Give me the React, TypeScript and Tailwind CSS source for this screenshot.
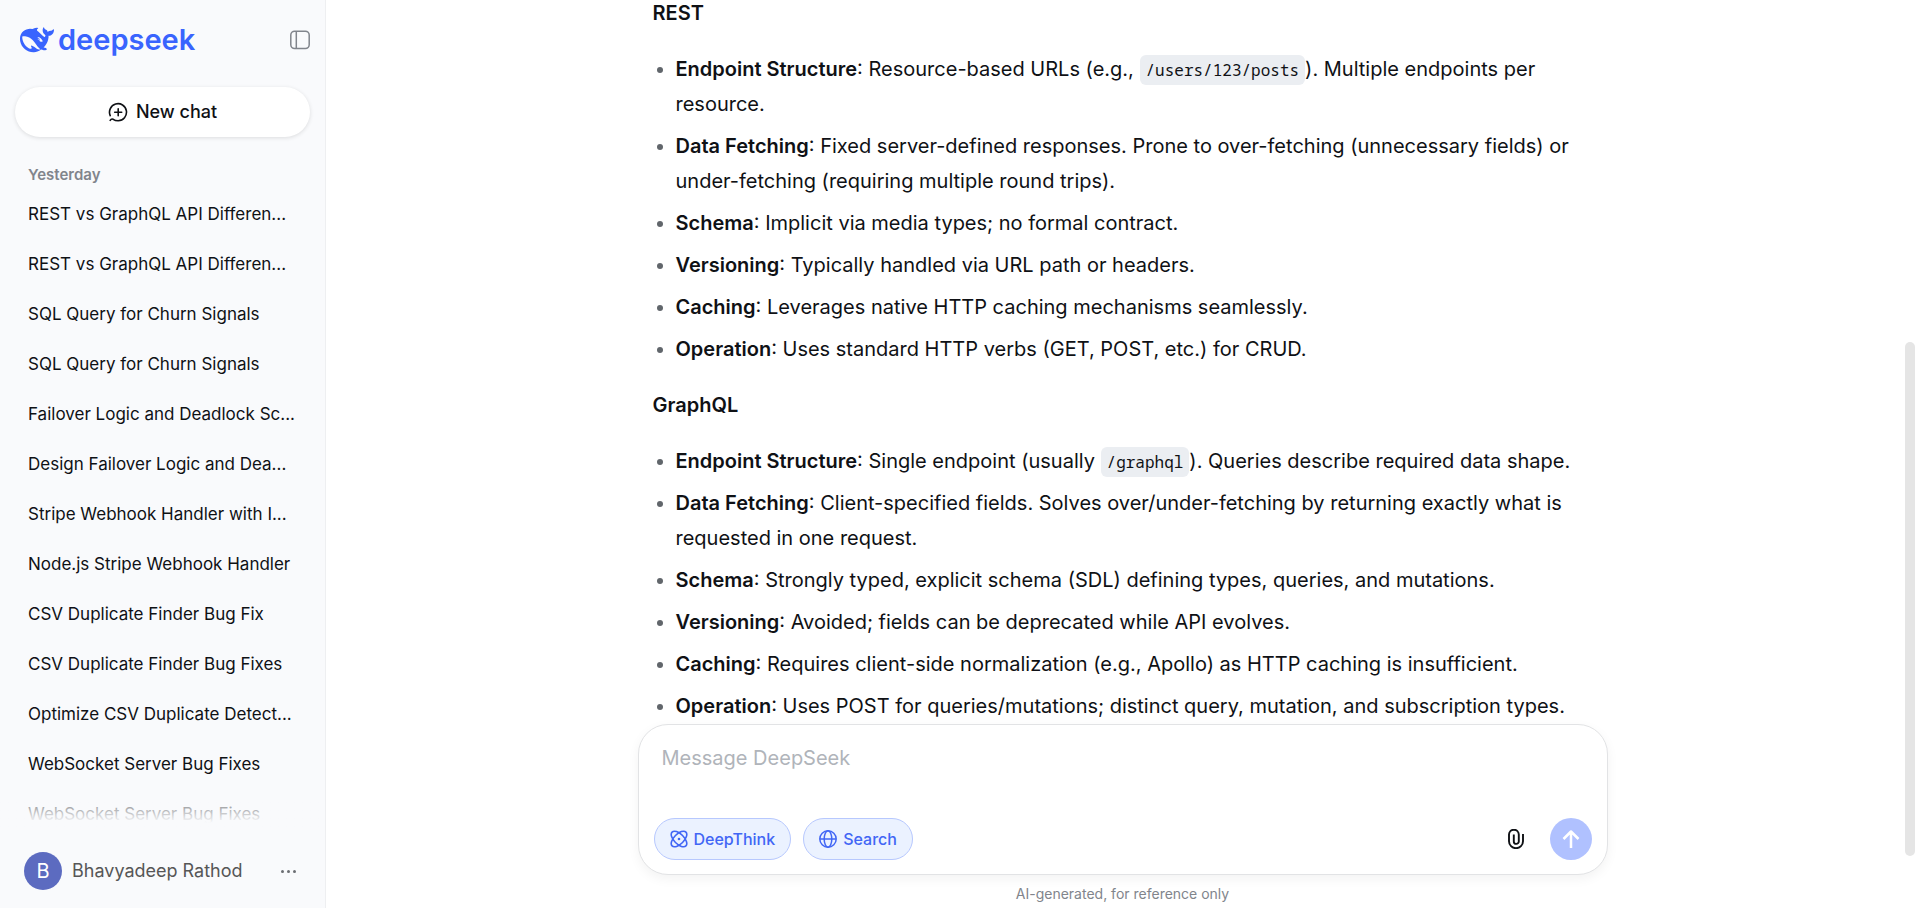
import type { ReactNode } from "react";

interface Conversation {
  id: number;
  title: string;
}

interface Point {
  term: string;
  text: ReactNode;
}

const conversations: Conversation[] = [
  { id: 1, title: "REST vs GraphQL API Differen..." },
  { id: 2, title: "REST vs GraphQL API Differen..." },
  { id: 3, title: "SQL Query for Churn Signals" },
  { id: 4, title: "SQL Query for Churn Signals" },
  { id: 5, title: "Failover Logic and Deadlock Sc..." },
  { id: 6, title: "Design Failover Logic and Dea..." },
  { id: 7, title: "Stripe Webhook Handler with I..." },
  { id: 8, title: "Node.js Stripe Webhook Handler" },
  { id: 9, title: "CSV Duplicate Finder Bug Fix" },
  { id: 10, title: "CSV Duplicate Finder Bug Fixes" },
  { id: 11, title: "Optimize CSV Duplicate Detect..." },
  { id: 12, title: "WebSocket Server Bug Fixes" },
  { id: 13, title: "WebSocket Server Bug Fixes" },
];

const restPoints: Point[] = [
  {
    term: "Endpoint Structure",
    text: (
      <>
        Resource-based URLs (e.g., <Code>/users/123/posts</Code>). Multiple endpoints per resource.
      </>
    ),
  },
  {
    term: "Data Fetching",
    text: "Fixed server-defined responses. Prone to over-fetching (unnecessary fields) or under-fetching (requiring multiple round trips).",
  },
  { term: "Schema", text: "Implicit via media types; no formal contract." },
  { term: "Versioning", text: "Typically handled via URL path or headers." },
  { term: "Caching", text: "Leverages native HTTP caching mechanisms seamlessly." },
  { term: "Operation", text: "Uses standard HTTP verbs (GET, POST, etc.) for CRUD." },
];

const graphqlPoints: Point[] = [
  {
    term: "Endpoint Structure",
    text: (
      <>
        Single endpoint (usually <Code>/graphql</Code>). Queries describe required data shape.
      </>
    ),
  },
  {
    term: "Data Fetching",
    text: "Client-specified fields. Solves over/under-fetching by returning exactly what is requested in one request.",
  },
  { term: "Schema", text: "Strongly typed, explicit schema (SDL) defining types, queries, and mutations." },
  { term: "Versioning", text: "Avoided; fields can be deprecated while API evolves." },
  { term: "Caching", text: "Requires client-side normalization (e.g., Apollo) as HTTP caching is insufficient." },
  { term: "Operation", text: "Uses POST for queries/mutations; distinct query, mutation, and subscription types." },
];

function Code({ children }: { children: ReactNode }) {
  return (
    <code className="rounded-md bg-[#ebeef2] px-[6px] py-1 font-['Noto_Sans_Mono','DejaVu_Sans_Mono',monospace] text-base">
      {children}
    </code>
  );
}

function WhaleIcon() {
  return (
    <svg viewBox="0 0 24 24" className="size-[34px]" fill="currentColor" aria-hidden="true">
      <path d="M23.748 4.482c-.254-.124-.364.113-.512.234-.051.039-.094.09-.137.136-.372.397-.806.657-1.373.626-.829-.046-1.537.214-2.163.848-.133-.782-.575-1.248-1.247-1.548-.352-.156-.708-.311-.955-.65-.172-.241-.219-.51-.305-.774-.055-.16-.11-.323-.293-.35-.2-.031-.278.136-.356.276-.313.572-.434 1.202-.422 1.84.027 1.436.633 2.58 1.838 3.393.137.093.172.187.129.323-.082.28-.18.552-.266.833-.055.179-.137.217-.329.14a5.526 5.526 0 01-1.736-1.18c-.857-.828-1.631-1.742-2.597-2.458a11.365 11.365 0 00-.689-.471c-.985-.957.13-1.743.388-1.836.27-.098.093-.432-.779-.428-.872.004-1.67.295-2.687.684a3.055 3.055 0 01-.465.137 9.597 9.597 0 00-2.883-.102c-1.885.21-3.39 1.102-4.497 2.623C.082 8.606-.231 10.684.152 12.85c.403 2.284 1.569 4.175 3.36 5.653 1.858 1.533 3.997 2.284 6.438 2.14 1.482-.085 3.133-.284 4.994-1.86.47.234.962.327 1.78.397.63.059 1.236-.03 1.705-.128.735-.156.684-.837.419-.961-2.155-1.004-1.682-.595-2.113-.926 1.096-1.296 2.746-2.642 3.392-7.003.05-.347.007-.565 0-.845-.004-.17.035-.237.23-.256a4.173 4.173 0 001.545-.475c1.396-.763 1.96-2.015 2.093-3.517.02-.23-.004-.467-.247-.588zM11.581 18c-2.089-1.642-3.102-2.183-3.52-2.16-.392.024-.321.471-.235.763.09.288.207.486.371.739.114.167.192.416-.113.603-.673.416-1.842-.14-1.897-.167-1.361-.802-2.5-1.86-3.301-3.307-.774-1.393-1.224-2.887-1.298-4.482-.02-.386.093-.522.477-.592a4.696 4.696 0 011.529-.039c2.132.312 3.946 1.265 5.468 2.774.868.86 1.525 1.887 2.202 2.891.72 1.066 1.494 2.082 2.48 2.914.348.292.625.514.891.677-.802.09-2.14.11-3.054-.614zm1-6.44a.306.306 0 01.415-.287.302.302 0 01.2.288.306.306 0 01-.31.307.303.303 0 01-.304-.308zm3.11 1.596c-.2.081-.399.151-.59.16a1.245 1.245 0 01-.798-.254c-.274-.23-.47-.358-.552-.758a1.73 1.73 0 01.016-.588c.07-.327-.008-.537-.239-.727-.187-.156-.426-.199-.688-.199a.559.559 0 01-.254-.078c-.11-.054-.2-.19-.114-.358.028-.054.16-.186.192-.21.356-.202.767-.136 1.146.016.352.144.618.408 1.001.782.391.451.462.576.685.914.176.265.336.537.445.848.067.195-.019.354-.25.452z" />
    </svg>
  );
}

function SidebarIcon() {
  return (
    <svg viewBox="0 0 20 20" className="size-5" fill="none" stroke="currentColor" strokeWidth="1.5" aria-hidden="true">
      <rect x="0.8" y="1.2" width="18.4" height="17.4" rx="3.8" />
      <path d="M6.3 1.2v17.4" />
    </svg>
  );
}

function NewChatIcon() {
  return (
    <svg viewBox="0 0 20 20" className="size-5" fill="none" stroke="currentColor" strokeWidth="1.6" strokeLinecap="round" aria-hidden="true">
      <path d="M2.2 13.6A8.5 8.5 0 1 1 10.2 18.7C8 18.7 6.6 18.3 5.2 17.3 4 16.6 2.9 17.2 2.2 18.4" />
      <path d="M10.2 6.7v7M6.7 10.2h7" />
    </svg>
  );
}

function ThinkIcon() {
  return (
    <svg viewBox="0 0 18 18" className="size-[18px]" fill="none" stroke="currentColor" strokeWidth="1.6" aria-hidden="true">
      <ellipse cx="9" cy="9" rx="9.8" ry="5" transform="rotate(45 9 9)" />
      <ellipse cx="9" cy="9" rx="9.8" ry="5" transform="rotate(-45 9 9)" />
      <circle cx="9" cy="9" r="1.3" fill="currentColor" stroke="none" />
    </svg>
  );
}

function GlobeIcon() {
  return (
    <svg viewBox="0 0 18 18" className="size-[18px]" fill="none" stroke="currentColor" strokeWidth="1.5" aria-hidden="true">
      <circle cx="9" cy="9" r="8.2" />
      <ellipse cx="9" cy="9" rx="3.8" ry="8.2" />
      <path d="M1 9h16" />
    </svg>
  );
}

function ClipIcon() {
  return (
    <svg viewBox="0 0 18 20" className="h-5 w-[18px]" fill="none" stroke="currentColor" strokeWidth="1.9" aria-hidden="true">
      <path d="M16 5v7.2a7 7 0 0 1-14 0V5.6a4.7 4.7 0 0 1 9.8 0v6.8a2.5 2.5 0 0 1-5 0V5.4" />
    </svg>
  );
}

function ArrowUpIcon() {
  return (
    <svg viewBox="0 0 18 18" className="size-[18px]" fill="none" stroke="currentColor" strokeWidth="2.5" aria-hidden="true">
      <path d="M9 18V1.5M1.5 9L9 1.5 16.5 9" strokeLinejoin="round" />
    </svg>
  );
}

function Sidebar() {
  return (
    <aside className="flex w-[326px] shrink-0 flex-col border-r border-[#eeeff1] bg-[#f9fafc]">
      <div className="flex h-20 items-center justify-between pr-[15px] pl-5">
        <a href="#" className="flex items-center gap-1 text-[#3964fe]">
          <WhaleIcon />
          <span className="text-[29px] leading-8 font-semibold">deepseek</span>
        </a>
        <button type="button" aria-label="Toggle sidebar" className="text-[#81858c]">
          <SidebarIcon />
        </button>
      </div>
      <button
        type="button"
        className="mx-[15px] mt-[7px] flex h-[50px] shrink-0 items-center justify-center gap-2 rounded-full bg-white text-lg font-medium shadow-[0_1px_4px_rgba(0,0,0,0.12)]"
      >
        <NewChatIcon />
        New chat
      </button>
      <nav className="relative mt-6 min-h-0 flex-1 overflow-hidden">
        <h2 className="px-7 text-[15px] leading-7 font-semibold text-[#81858c]">Yesterday</h2>
        <ul>
          {conversations.map((chat) => (
            <li key={chat.id}>
              <a href="#" className="block pl-7 text-[17px] leading-[50px] whitespace-nowrap">
                {chat.title}
              </a>
            </li>
          ))}
        </ul>
        <div className="pointer-events-none absolute inset-x-0 bottom-0 h-14 bg-linear-to-t from-[#f9fafc] from-20% to-transparent" />
      </nav>
      <div className="flex h-[74px] shrink-0 items-center gap-[10px] pr-[29px] pl-6">
        <span className="flex size-[38px] items-center justify-center rounded-full bg-[#5c6bc0] text-xl text-white">B</span>
        <span className="flex-1 text-lg text-[#565656]">Bhavyadeep Rathod</span>
        <button type="button" aria-label="Account menu" className="flex gap-[3px] text-[#6b6e73]">
          <span className="size-[3px] rounded-full bg-current" />
          <span className="size-[3px] rounded-full bg-current" />
          <span className="size-[3px] rounded-full bg-current" />
        </button>
      </div>
    </aside>
  );
}

function PointList({ points }: { points: Point[] }) {
  return (
    <ul className="flex flex-col gap-[7px]">
      {points.map((point) => (
        <li key={point.term} className="flex">
          <span className="mt-[15px] mr-[13px] ml-1 size-[6px] shrink-0 rounded-full bg-[#61666b]" />
          <p>
            <strong className="font-semibold">{point.term}</strong>: {point.text}
          </p>
        </li>
      ))}
    </ul>
  );
}

function Composer() {
  return (
    <form className="rounded-[30px] border border-[#e2e3e5] bg-white px-[15px] pt-4 pb-[14px] shadow-[0_4px_12px_rgba(0,0,0,0.05)]">
      <textarea
        aria-label="Message DeepSeek"
        placeholder="Message DeepSeek"
        rows={2}
        className="block h-[77px] w-full resize-none px-2 text-xl leading-[35px] outline-none placeholder:text-[#b0b4ba]"
      />
      <div className="flex items-center gap-3 text-base font-medium text-[#4166f5]">
        <button type="button" className="flex h-[42px] items-center gap-[6px] rounded-full border border-[#b7c8fe] bg-[#ebf2ff] px-[15px]">
          <ThinkIcon />
          DeepThink
        </button>
        <button type="button" className="flex h-[42px] items-center gap-[6px] rounded-full border border-[#b7c8fe] bg-[#ebf2ff] px-[15px]">
          <GlobeIcon />
          Search
        </button>
        <button type="button" aria-label="Attach file" className="mr-[13px] ml-auto text-[#0f1115]">
          <ClipIcon />
        </button>
        <button type="submit" aria-label="Send" className="flex size-[42px] items-center justify-center rounded-full bg-[#b0c1ff] text-white">
          <ArrowUpIcon />
        </button>
      </div>
    </form>
  );
}

export default function App() {
  return (
    <div className="flex h-screen bg-white font-['Inter',sans-serif] text-[#0f1115]">
      <Sidebar />
      <main className="relative flex min-w-0 flex-1 flex-col">
        <div className="flex min-h-0 flex-1 flex-col justify-end overflow-hidden">
          <article className="mx-auto w-full max-w-[940px] text-xl leading-[35px]">
            <h3 className="mb-[21px] font-semibold">REST</h3>
            <PointList points={restPoints} />
            <h3 className="my-[21px] font-semibold">GraphQL</h3>
            <PointList points={graphqlPoints} />
          </article>
        </div>
        <div className="mx-auto w-full max-w-[970px]">
          <Composer />
          <p className="pt-[9px] pb-1 text-center text-sm text-[#81858c]">AI-generated, for reference only</p>
        </div>
        {/* scroll thumb */}
        <div className="absolute top-[342px] right-1 h-[514px] w-[10px] rounded-full bg-[#e5e5e5]" />
      </main>
    </div>
  );
}
